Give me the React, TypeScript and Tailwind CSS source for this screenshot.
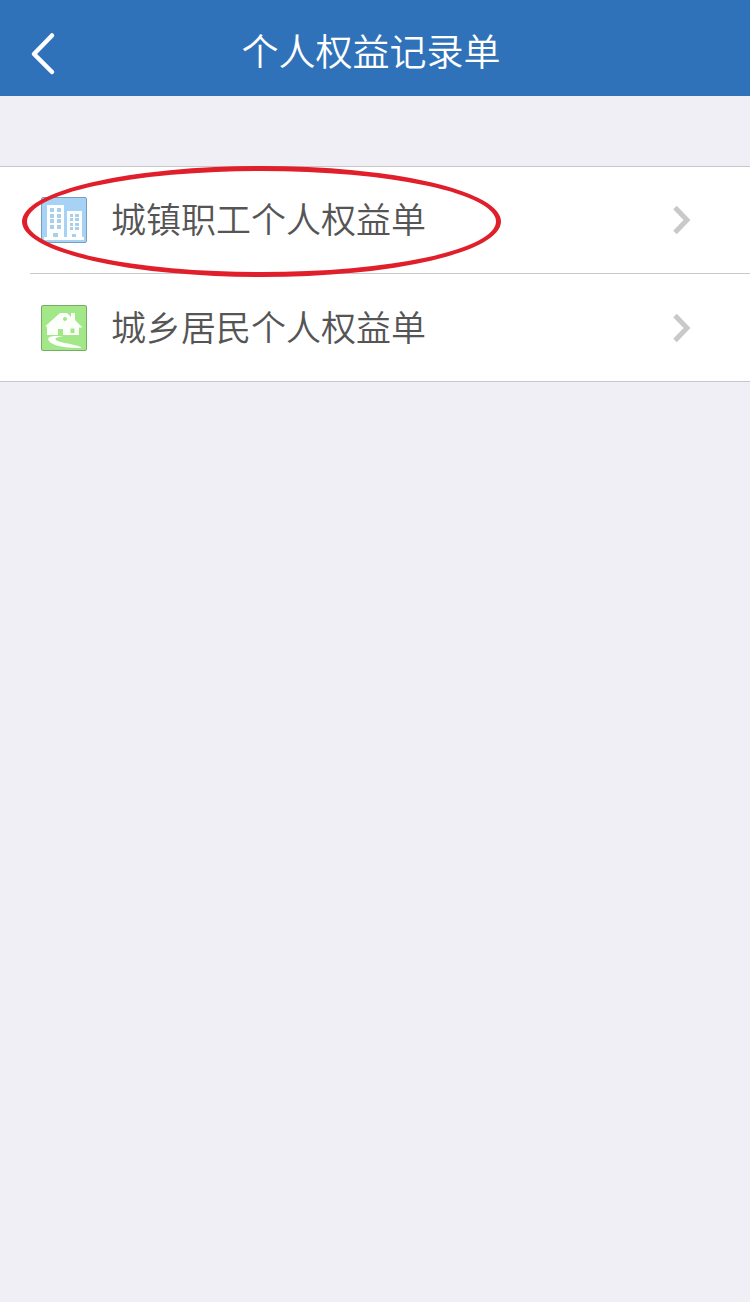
import React from 'react';

interface RecordItem {
  label: string;
  icon: React.ReactNode;
  marked?: boolean;
}

const BuildingIcon: React.FC = () => (
  <svg className="w-[46px] h-[46px] shrink-0" viewBox="0 0 46 46" aria-hidden="true">
    <rect x="0.5" y="0.5" width="45" height="45" rx="1.5" fill="#a6d2f5" stroke="#7a9dba" />
    <path d="M6 8h17v32h3V14h15v26h2v3H3v-3h3z" fill="#fdfeff" />
    <g fill="#a9cfe9">
      {[11, 17, 22, 28].map((y) => (
        <React.Fragment key={y}>
          <rect x="9" y={y} width="4" height="4" />
          <rect x="16" y={y} width="4" height="4" />
        </React.Fragment>
      ))}
      {[17, 21, 26, 30].map((y) => (
        <React.Fragment key={y}>
          <rect x="29" y={y} width="3" height="3" />
          <rect x="34" y={y} width="4" height="3" />
        </React.Fragment>
      ))}
      <rect x="12" y="36" width="5" height="4" />
      <rect x="31" y="37" width="4" height="3" />
    </g>
  </svg>
);

const HouseIcon: React.FC = () => (
  <svg className="w-[46px] h-[46px] shrink-0" viewBox="0 0 46 46" aria-hidden="true">
    <rect x="0.5" y="0.5" width="45" height="45" rx="1.5" fill="#a2e888" stroke="#78ac68" />
    <path
      fillRule="evenodd"
      d="M4 21.500L19 8h7l4 4V8h4v7l7.500 7.500H38V30H22v-6h-5v6H6v-8.500zM29.500 23.500v4.500h4v-4.500zM24 12a2 2 0 1 0 .01 0z"
      fill="#fdfffb"
    />
    <path
      d="M22 31c-5 1-9 2-7 4 3 3 15 3 25 7v1c-12 0-24-1-30-5-5-4-3-7 4-7z"
      fill="#fdfffb"
    />
  </svg>
);

const items: RecordItem[] = [
  { label: '城镇职工个人权益单', icon: <BuildingIcon />, marked: true },
  { label: '城乡居民个人权益单', icon: <HouseIcon /> }
];

const Header: React.FC = () => (
  <header className="relative flex h-24 items-center justify-center bg-[#3072b9] pt-1 pr-2">
    <button type="button" aria-label="返回" className="absolute inset-y-0 left-0 flex items-center pl-7 pt-3">
      <svg className="w-8 h-12" viewBox="0 0 32 48" fill="none" aria-hidden="true">
        <path
          d="M24 5.500L6 24l18 18"
          stroke="#fff"
          strokeWidth="4.500"
          strokeLinecap="round"
          strokeLinejoin="round"
        />
      </svg>
    </button>
    <h1 className="text-[37px] leading-12 font-[350] text-white">个人权益记录单</h1>
  </header>
);

const RecordRow: React.FC<{ item: RecordItem }> = ({ item }) => (
  <li className="relative h-[107px] border-b border-[#c8c7cc] last:border-b-0">
    <a href="#" className="flex h-full items-center pl-[11px] pr-[58px]">
      {item.icon}
      <span className="ml-6 flex-1 pb-1 text-[35px] leading-12 font-[350] text-[#555]">{item.label}</span>
      <svg className="w-5 h-8 shrink-0" viewBox="0 0 20 32" fill="none" aria-hidden="true">
        <path d="M3 3.500L15 16 3 28.500" stroke="#c9c9c9" strokeWidth="5" />
      </svg>
    </a>
    {item.marked ? (
      <span className="pointer-events-none absolute -left-2 -top-px h-[111px] w-[479px] rounded-[50%] border-5 border-[#e01f2a]" />
    ) : null}
  </li>
);

const App: React.FC = () => {
  return (
    <div className="min-h-screen bg-[#efeff5] font-['Noto_Sans_CJK_SC',sans-serif]">
      <Header />
      <main className="pt-[70px]">
        <ul className="border-y border-[#c8c7cc] bg-white pl-[30px]">
          {items.map((item) => (
            <RecordRow key={item.label} item={item} />
          ))}
        </ul>
      </main>
    </div>
  );
};

export default App;
